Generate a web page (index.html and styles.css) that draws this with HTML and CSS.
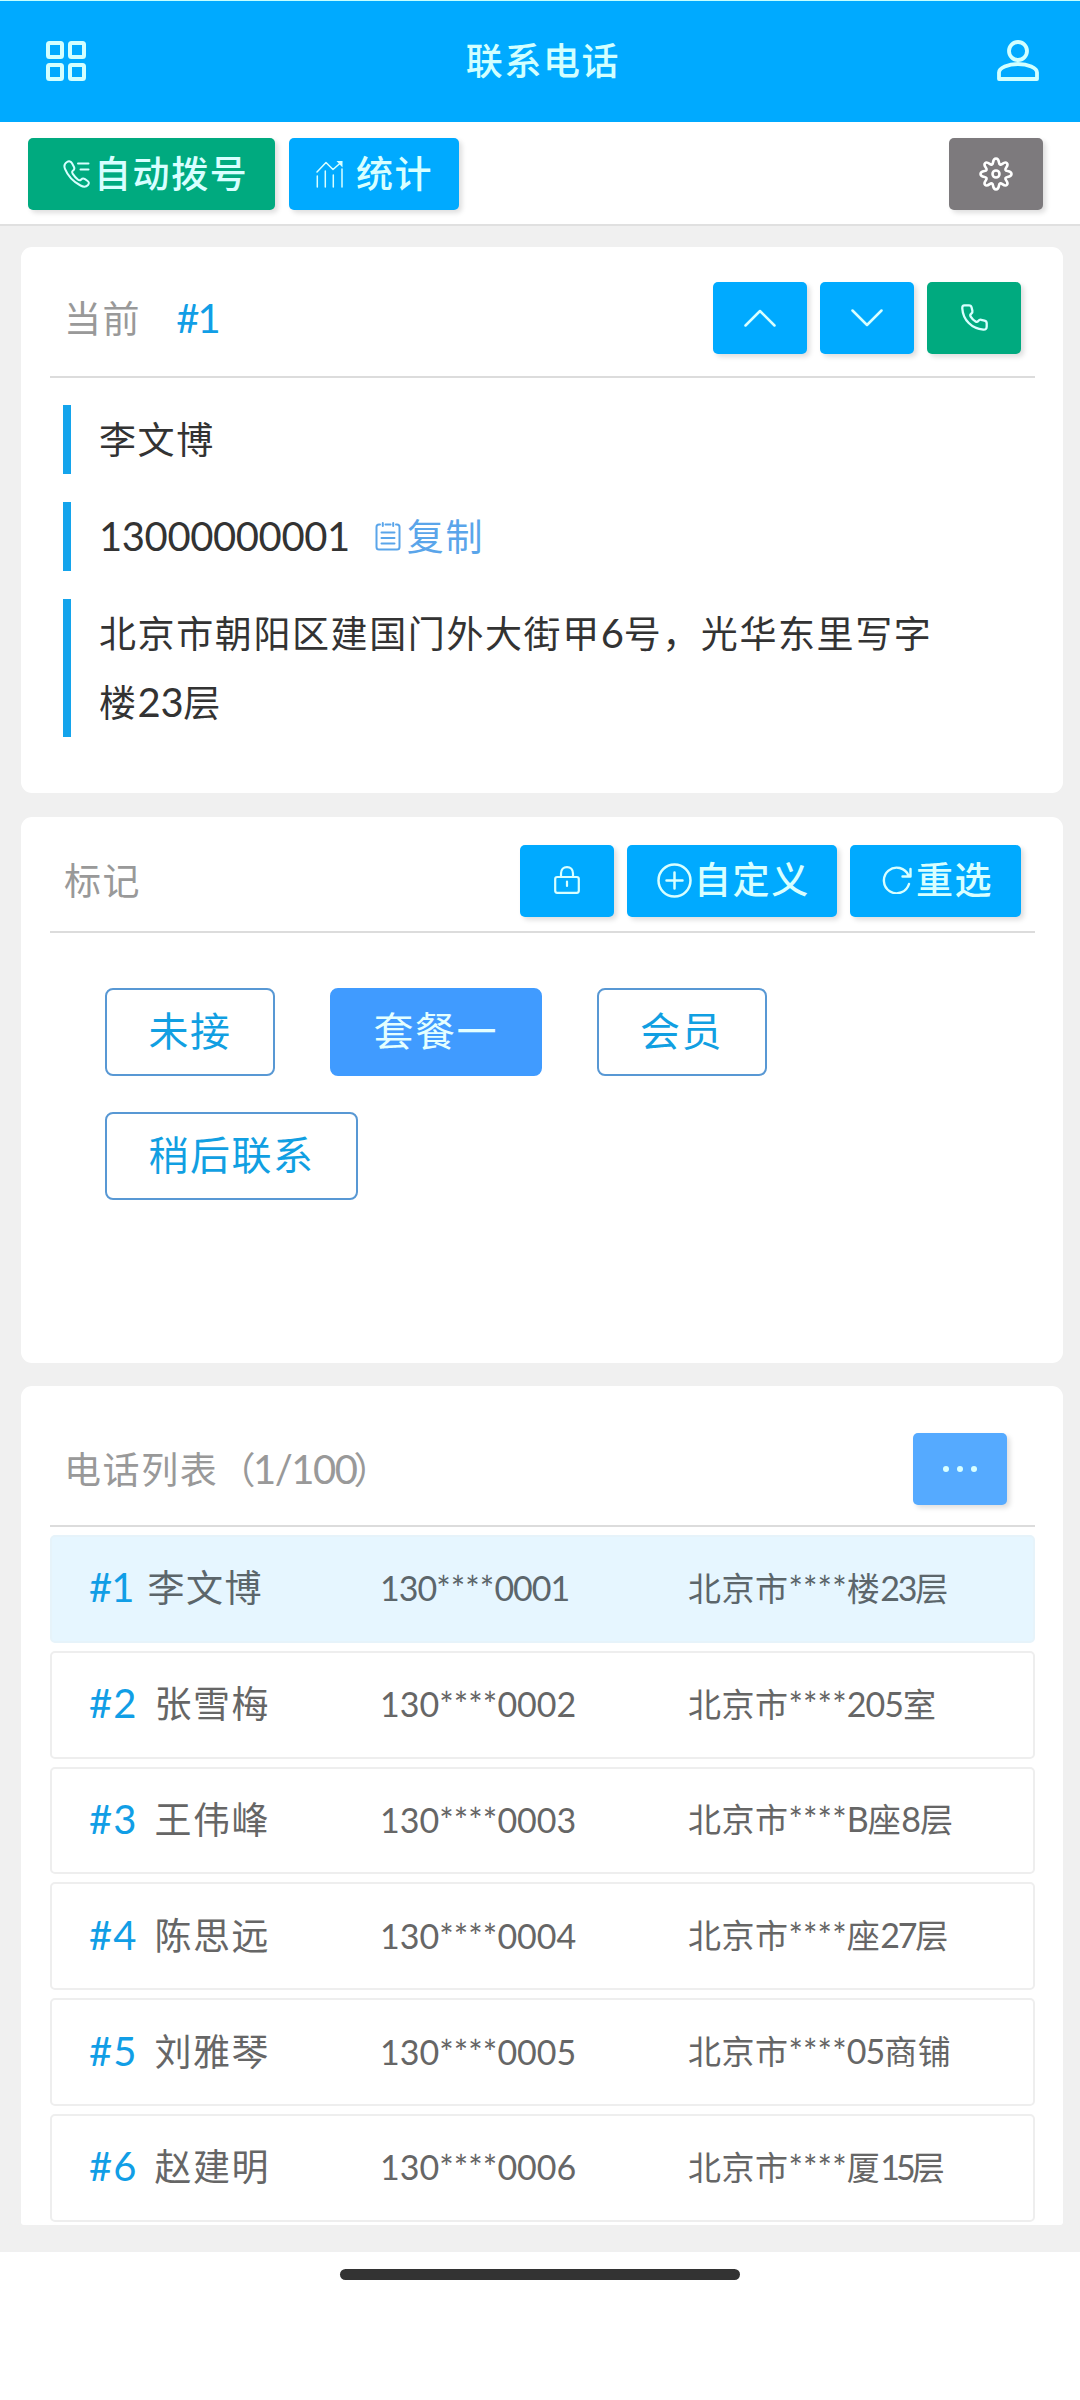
FILE: index.html
```html
<!DOCTYPE html>
<html lang="zh-CN">
<head>
<meta charset="utf-8">
<title>联系电话</title>
<link rel="stylesheet" href="styles.css">
</head>
<body>
<header class="topbar">
  <svg class="icon" width="40" height="40" viewBox="0 0 40 40" stroke-width="4"><rect x="2" y="2" width="14" height="14" rx="1.5"/><rect x="24" y="2" width="14" height="14" rx="1.5"/><rect x="2" y="24" width="14" height="14" rx="1.5"/><rect x="24" y="24" width="14" height="14" rx="1.5"/></svg>
  <h1 class="topbar-title">联系电话</h1>
  <svg class="icon" width="42" height="42" viewBox="0 0 42 42" stroke-width="3.8"><circle cx="21" cy="11" r="9"/><path d="M2 39V32.5C2 28 11 24 21 24S40 28 40 32.5V39Z"/></svg>
</header>
<nav class="toolbar">
  <button class="btn btn-green btn-dial"><svg class="icon" width="27" height="28" viewBox="0 0 27 28" stroke-width="2"><path d="M4 2C6 .8 8 1.400 9 3.200L11 7C11.800 8.700 11.200 9.800 9.800 10.800C8.800 11.600 9 12.600 9.800 13.900C11.300 16.200 12.900 18 14.800 19.500C16.100 20.600 17.300 20.500 18.200 19.500C19.400 18.200 20.500 18.200 22 19.200L24.600 21C26.200 22.100 26.200 23.700 25 25C23 27.200 20.300 27 17.500 25.500C11 22 4.700 15.500 2 8.800C.8 5.800 1.600 3.400 4 2Z"/><path d="M15 3.500H25.500M17.500 9.500H25.500"/></svg>自动拨号</button>
  <button class="btn btn-blue btn-stat"><svg class="icon" width="28" height="28" viewBox="0 0 28 28" stroke-width="1.500"><path d="M1 12L10 2.500L17 9.500L25.500 2M1.300 16V27M9.300 11V27M17.300 15V27M26 9V27"/><path d="M20.500 1H26.500V7.500Z" fill="currentColor" stroke="none"/></svg>统计</button>
  <button class="btn btn-gray btn-square btn-settings"><svg class="icon" width="34" height="34" viewBox="0 0 34 34" stroke-width="2.600"><path d="M14 5.500C14.400 2.800 15 1.500 17 1.500S19.600 2.800 20 5.500C20.300 7.700 21.500 8.200 23.300 6.900C25.500 5.200 26.700 4.900 27.900 6.100S28.800 8.500 27.100 10.700C25.800 12.500 26.300 13.700 28.500 14C31.200 14.400 32.500 15 32.500 17S31.200 19.600 28.500 20C26.300 20.300 25.800 21.500 27.100 23.300C28.800 25.500 29.100 26.700 27.900 27.900S25.500 28.800 23.300 27.100C21.500 25.800 20.300 26.300 20 28.500C19.600 31.200 19 32.500 17 32.500S14.400 31.200 14 28.500C13.700 26.300 12.500 25.800 10.700 27.100C8.500 28.800 7.300 29.100 6.100 27.900S5.200 25.500 6.900 23.300C8.200 21.500 7.700 20.300 5.500 20C2.800 19.600 1.500 19 1.500 17S2.800 14.400 5.500 14C7.700 13.700 8.200 12.500 6.900 10.700C5.200 8.500 4.900 7.300 6.100 6.100S8.500 5.200 10.700 6.900C12.500 8.200 13.700 7.700 14 5.500Z"/><circle cx="17" cy="17" r="3.500"/></svg></button>
</nav>
<main class="page">
  <section class="card card-current">
    <div class="card-head">
      <h2 class="card-title">当前</h2><span class="current-id num">#1</span>
      <div class="actions">
        <button class="btn btn-blue btn-square"><svg class="icon" width="32" height="18" viewBox="0 0 32 18" stroke-width="2.500"><path d="M1.500 16.500L16 2L30.500 16.500"/></svg></button>
        <button class="btn btn-blue btn-square"><svg class="icon" width="32" height="18" viewBox="0 0 32 18" stroke-width="2.500"><path d="M1.500 1.500L16 16L30.500 1.500"/></svg></button>
        <button class="btn btn-green btn-square"><svg class="icon" width="27" height="27" viewBox="0 0 27 27" stroke-width="2.300"><path d="M3.500 1.300H8C9.500 1.300 10.300 2 10.600 3.400L11.400 6.800C11.700 8.100 11.300 8.900 10.200 9.700C9 10.600 8.900 11.300 9.700 12.600C11 14.800 12.600 16.300 14.600 17.500C15.800 18.200 16.400 18 17.300 16.900C18.100 15.900 18.900 15.500 20.200 15.800L23.500 16.600C25 17 25.700 17.700 25.700 19.200V22.500C25.700 24.800 24.600 25.800 22.300 25.600C10.800 24.800 2 16 1.300 4.500C1.200 2.500 1.700 1.300 3.500 1.300Z"/></svg></button>
      </div>
    </div>
    <div class="details">
      <p class="detail">李文博</p>
      <p class="detail"><span class="num">13000000001</span><a class="copy"><svg class="icon" width="26" height="29" viewBox="0 0 26 29" stroke-width="2"><path d="M5 2.500H4Q1.500 2.500 1.500 5V25Q1.500 27.500 4 27.500H22Q24.500 27.500 24.500 25V5Q24.500 2.500 22 2.500H21M10.500 2.500H15.500M7.800 1V4M18.200 1V4M6.500 10.500H19.500M6.500 16H19.500M6.500 21.500H19.500"/></svg>复制</a></p>
      <p class="detail">北京市朝阳区建国门外大街甲<span class="num">6</span>号，光华东里写字楼<span class="num">23</span>层</p>
    </div>
  </section>
  <section class="card card-marks">
    <div class="card-head">
      <h2 class="card-title">标记</h2>
      <div class="actions">
        <button class="btn btn-blue btn-square"><svg class="icon" width="26" height="28" viewBox="0 0 26 28" stroke-width="2.200"><rect x="1.200" y="11" width="23.600" height="15.800" rx="2"/><path d="M7 11V7.500C7 3.500 9.500 1.200 13 1.200S19 3.500 19 7.500V11M13 15.500V20"/></svg></button>
        <button class="btn btn-blue btn-custom"><svg class="icon" width="35" height="35" viewBox="0 0 35 35" stroke-width="2.500"><circle cx="17.500" cy="17.500" r="16"/><path d="M9.500 17.500H25.500M17.500 9.500V25.500"/></svg>自定义</button>
        <button class="btn btn-blue btn-reset"><svg class="icon" width="30" height="28" viewBox="0 0 30 28" stroke-width="2.400"><path d="M27 18A12.800 12.800 0 1 1 26.500 9.500M28.500 3V10.500H20.500"/></svg>重选</button>
      </div>
    </div>
    <div class="tags">
      <button class="tag">未接</button><button class="tag tag-active">套餐一</button><button class="tag">会员</button><button class="tag">稍后联系</button>
    </div>
  </section>
  <section class="card card-list">
    <div class="card-head">
      <h2 class="card-title">电话列表（<span class="num">1/100</span>）</h2>
      <div class="actions">
        <button class="btn btn-soft btn-square"><svg class="icon" width="36" height="8" viewBox="0 0 36 8"><g fill="currentColor" stroke="none"><circle cx="4" cy="4" r="3"/><circle cx="18" cy="4" r="3"/><circle cx="32" cy="4" r="3"/></g></svg></button>
      </div>
    </div>
    <ul class="list">
      <li class="row row-active"><span class="who"><b class="num">#1</b>李文博</span><span class="phone">130<i>****</i>0001</span><span class="addr">北京市<i>****</i>楼<s class="tight">23</s>层</span></li>
      <li class="row"><span class="who"><b class="num">#2</b>张雪梅</span><span class="phone">130<i>****</i>0002</span><span class="addr">北京市<i>****</i><s>205</s>室</span></li>
      <li class="row"><span class="who"><b class="num">#3</b>王伟峰</span><span class="phone">130<i>****</i>0003</span><span class="addr">北京市<i>****</i><s>B</s>座<s>8</s>层</span></li>
      <li class="row"><span class="who"><b class="num">#4</b>陈思远</span><span class="phone">130<i>****</i>0004</span><span class="addr">北京市<i>****</i>座<s class="tight">27</s>层</span></li>
      <li class="row"><span class="who"><b class="num">#5</b>刘雅琴</span><span class="phone">130<i>****</i>0005</span><span class="addr">北京市<i>****</i><s>05</s>商铺</span></li>
      <li class="row"><span class="who"><b class="num">#6</b>赵建明</span><span class="phone">130<i>****</i>0006</span><span class="addr">北京市<i>****</i>厦<s class="tighter">15</s>层</span></li>
    </ul>
  </section>
</main>
<footer class="homebar"><div class="homebar-pill"></div></footer>
</body>
</html>
```
FILE: styles.css
```css
* { box-sizing: border-box; margin: 0; padding: 0; }
body {
  background: #fff;
  color: #333;
  font: 37px/69px Lato, "Noto Sans CJK SC", sans-serif;
  letter-spacing: 1.6px;
}
button { border: 0; background: none; font: inherit; letter-spacing: inherit; }
h1, h2, b { font-weight: 400; }
i, s { font-style: normal; text-decoration: none; }
.icon { display: block; flex: none; fill: none; stroke: currentColor; stroke-linecap: round; stroke-linejoin: round; }
.num { font-size: 40px; letter-spacing: -0.400px; line-height: 1; }

.topbar {
  display: flex;
  align-items: center;
  justify-content: space-between;
  height: 122px;
  padding: 0 41px 2px 46px;
  border-top: 1px solid #c4ffff;
  background: #0af;
  color: #d2ffff;
}
.topbar-title { padding-left: 3px; font-size: 37px; font-weight: 500; }

.toolbar {
  display: flex;
  gap: 14px;
  height: 104px;
  padding: 16px 37px 0 28px;
  border-bottom: 2px solid #e0e0e0;
  background: #fff;
}
.btn {
  display: flex;
  align-items: center;
  height: 72px;
  border-radius: 5px;
  box-shadow: 3px 3px 5px rgba(0, 0, 0, 0.13);
  color: #d8ffff;
  font-weight: 500;
  line-height: 68px;
  padding-bottom: 1px;
  white-space: nowrap;
}
.btn-blue { background: #0af; }
.btn-green { background: #00aa7f; }
.btn-gray { background: #7d7a7d; color: #fff; }
.btn-soft { background: #55aaff; }
.btn-square { width: 94px; justify-content: center; }
.btn-dial { width: 247px; padding-left: 35px; gap: 4px; }
.btn-stat { width: 170px; padding-left: 27px; gap: 12px; }
.btn-custom { width: 210px; padding-left: 30px; gap: 2px; }
.btn-reset { width: 171px; padding-left: 32px; gap: 4px; }
.btn-settings { margin-left: auto; }

.page {
  display: flex;
  flex-direction: column;
  height: 2026px;
  padding: 21px 17px 27px 21px;
  background: #f0f0f0;
}
.card { padding: 0 28px 0 29px; border-radius: 11px; background: #fff; }
.card-current { height: 546px; }
.card-marks { height: 546px; margin-top: 24px; }
.card-list { height: 839px; margin-top: 23px; border-radius: 11px 11px 3px 3px; }
.card-head {
  display: flex;
  align-items: center;
  height: 131px;
  padding: 13px 14px 0 14px;
  border-bottom: 2px solid #dcdcdc;
}
.card-marks .card-head { height: 116px; padding-top: 13px; }
.card-list .card-head { height: 141px; padding: 27px 28px 0 14px; }
.card-title { color: #999; font-size: 37px; }
.card-title .num { margin: 0 -3px 0 -4px; letter-spacing: -1.500px; }
.current-id { margin-left: 35px; color: #119ee6; letter-spacing: -2px; }
.actions { display: flex; gap: 13px; margin-left: auto; }

.details { display: flex; flex-direction: column; gap: 28px; padding: 27px 90px 0 13px; }
.detail { padding-left: 28px; border-left: 8px solid #14a4ec; line-height: 69px; }
.copy { display: inline-flex; align-items: center; gap: 6px; margin-left: 25px; height: 69px; vertical-align: top; color: #5aa5ea; }

.tags { display: flex; flex-wrap: wrap; gap: 36px 55px; padding: 55px 100px 0 55px; }
.tag {
  height: 88px;
  padding: 0 41.500px 2px 41.500px;
  border: 2px solid #5898d4;
  border-radius: 8px;
  color: #119fe2;
  font-size: 40px;
  letter-spacing: 1.500px;
  line-height: 80px;
}
.tag-active { border-color: #409bff; background: #409bff; color: #e4ffff; }

.list { display: flex; flex-direction: column; gap: 8px; padding-top: 8px; list-style: none; }
.row {
  display: grid;
  grid-template-columns: 291px 308px 1fr;
  align-items: center;
  height: 107.800px;
  padding: 0 0 2px 37px;
  border: 2px solid #eee;
  border-radius: 5px;
  color: #666;
}
.row-active { border-color: #e6f3fa; background: #e6f6ff; color: #5c666b; }
.who .num { margin-right: 17px; color: #119ee6; letter-spacing: 1px; }
.row-active .who .num { margin-right: 14px; letter-spacing: -1px; }
.phone { font-size: 34px; letter-spacing: 0; }
.row-active .phone { letter-spacing: -1px; }
.addr { font-size: 33px; letter-spacing: 0.500px; }
.addr s { font-size: 34px; letter-spacing: -1px; }
.addr .tight { letter-spacing: -2.200px; }
.addr .tighter { letter-spacing: -4px; }
.phone i, .addr i { letter-spacing: 0.100px; font-size: 34px; }

.homebar { display: flex; justify-content: center; padding-top: 17px; height: 148px; }
.homebar-pill { width: 400px; height: 11px; border-radius: 6px; background: #333; }
```
